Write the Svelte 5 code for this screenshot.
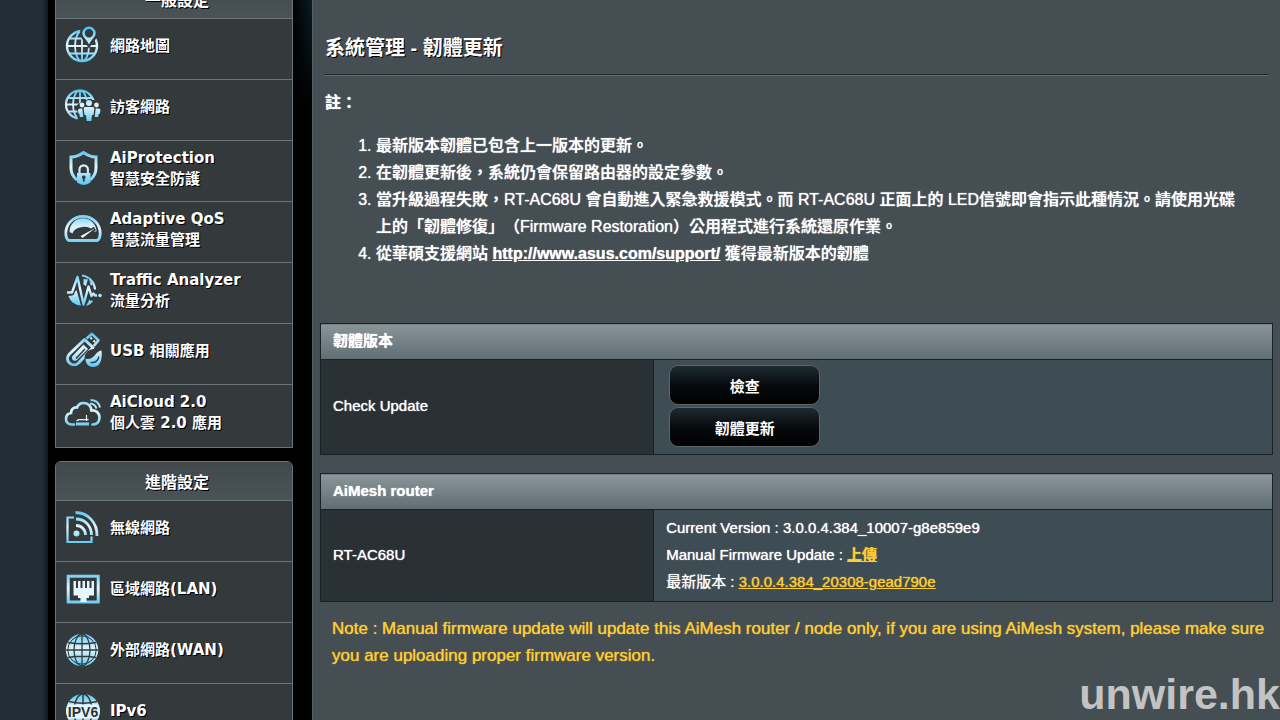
<script>
  const general = [
    { icon: 'map', lines: ['網路地圖'] },
    { icon: 'guest', lines: ['訪客網路'] },
    { icon: 'shield', lines: ['AiProtection', '智慧安全防護'] },
    { icon: 'gauge', lines: ['Adaptive QoS', '智慧流量管理'] },
    { icon: 'traffic', lines: ['Traffic Analyzer', '流量分析'] },
    { icon: 'usb', lines: ['USB 相關應用'] },
    { icon: 'cloud', lines: ['AiCloud 2.0', '個人雲 2.0 應用'] }
  ];
  const advanced = [
    { icon: 'wireless', lines: ['無線網路'] },
    { icon: 'lan', lines: ['區域網路(LAN)'] },
    { icon: 'wan', lines: ['外部網路(WAN)'] },
    { icon: 'ipv6', lines: ['IPv6'] }
  ];
</script>

{#snippet icon(name)}
  <svg class="icon" viewBox="0 0 38 38" aria-hidden="true">
    {#if name === 'map'}
      <g mask="url(#pin-gap)" fill="none" stroke="url(#ice)" stroke-width="1.8">
        <circle cx="18" cy="20" r="15" stroke-width="2.4" />
        <ellipse cx="18" cy="20" rx="7" ry="15" />
        <path d="M18 5V35.01M3 20H33M5.500 12.500H30.500M5.500 27.500H30.500" />
      </g>
      <path fill="url(#ice)" fill-rule="evenodd" d="M25 .5a6.700 6.700 0 0 1 6.700 6.700c0 4-4.700 6.300-6.700 11.300-2-5-6.700-7.300-6.700-11.300A6.700 6.700 0 0 1 25 .5zm0 2.600a4.200 4.200 0 1 0 0 8.400 4.200 4.200 0 0 0 0-8.400z" />
    {:else if name === 'guest'}
      <g mask="url(#guest-gap)" fill="none" stroke="url(#ice)" stroke-width="1.800">
        <circle cx="16" cy="17.500" r="14" stroke-width="2.200" />
        <ellipse cx="16" cy="17.500" rx="7" ry="14" />
        <path d="M16 3.500V31.510M2 17.500H30M4 11H28M4 24.500H28" />
      </g>
      <g fill="url(#ice)">
        <circle cx="25" cy="16" r="3" />
        <circle cx="18" cy="18" r="2.400" />
        <circle cx="32.500" cy="18" r="2.400" />
        <path d="M21 20h8q1.500 0 1.300 2l-.8 6h-1.500l-.7 6h-4.600l-.7-6h-1.500l-.8-6q-.2-2 1.300-2z" />
        <path d="M16 21.500h2.300l1 8.500h-3.500l-.5-3.500h-1l-.3-3.500q0-1.500 2-1.500zM34.500 21.500h-2.800l-1 8.500h3.500l.5-3h1l.8-4q0-1.500-2-1.500z" />
      </g>
    {:else if name === 'shield'}
      <path d="M13 32C8.500 28.500 7 25 7 20V9c5 0 9-2 12.500-4.500C23 7 27 9 32 9v11c0 5-1.500 8.500-6 12" fill="none" stroke="url(#ice)" stroke-width="3" />
      <path d="M15.500 26v-4.500a4.200 4.200 0 0 1 8.400 0V26" fill="none" stroke="url(#ice)" stroke-width="2.200" />
      <path fill="url(#ice)" fill-rule="evenodd" d="M13 25h13.500v9.500q-3.500 2-6.700 2.500-3.300-.5-6.800-2.500zM19.800 27.500a1.800 1.800 0 0 0-.9 3.400v2.600h1.800v-2.600a1.800 1.800 0 0 0-.9-3.400z" />
    {:else if name === 'gauge'}
      <path d="M4.500 31.500C2.500 30 1.800 27 1.800 24.500a17 17 0 0 1 34.400 0c0 2.500-.7 5.500-2.700 7z" fill="none" stroke="url(#ice)" stroke-width="2.800" stroke-linejoin="round" />
      <path d="M5.500 23a13.500 13.500 0 0 1 27-.5l-2.500 0a11.500 8.500 0 0 0-21.500 2z" fill="url(#ice)" />
      <path d="M17 27.500L31 19.500" stroke="#34393c" stroke-width="4" />
      <path d="M16.500 27L31.500 19 18.500 29z" fill="#e8f8ff" />
    {:else if name === 'traffic'}
      <path d="M18 5.500a15 15 0 0 1 13 14" fill="none" stroke="url(#ice)" stroke-width="2.200" />
      <path d="M19.500 9l5 .5 4 5-2.500 2-1-3-2.500 3-3-2z" fill="url(#ice)" />
      <path d="M4.500 26l4-.5 2.500-4 1.500-1.500 4.500 15.500C10 35 6 31 4.500 26zM22 36c3-.5 5.500-2.500 7-5l-3.500-1.500z" fill="url(#ice)" />
      <path d="M3.500 22.500H8L13.500 7l6 27.500 5-18 3 9.500 2-2.500 1.500 2h2" fill="none" stroke="#34393c" stroke-width="5" />
      <path d="M3 22.500h5L13.500 7l6 27.500 5-18 3 9.500 2-2.500 1.500 2h2" fill="none" stroke="url(#ice)" stroke-width="2.400" stroke-linejoin="round" />
      <circle cx="36" cy="25.500" r="1.800" fill="url(#ice)" />
    {:else if name === 'usb'}
      <path d="M22.500 7.500L28 2.800l6.500 6.500-4.700 5.500" fill="none" stroke="url(#ice)" stroke-width="2.600" stroke-linejoin="round" />
      <path d="M26.500 6.500l1.500 1.500M29.500 9.500l1.500 1.500" stroke="#e6f6fd" stroke-width="2" />
      <path d="M20.500 8.500l8.500 8L14.500 32c-6 5.500-15-2.500-9-9z" fill="none" stroke="url(#ice)" stroke-width="3" stroke-linejoin="round" />
      <path d="M19.500 13.500l4.500 4.500-11 11c-3 2.500-6.500-1-4.500-4z" fill="url(#ice)" />
      <path d="M12 27.500l9-9.500" stroke="#34393c" stroke-width="1.500" />
      <circle cx="29.500" cy="27" r="9" fill="#34393c" />
      <path d="M21.500 27.500C25 29 29 27 31 24c2-2.700 3.500-4 6.500-4.500 1.200 9-1.500 16.500-8 16.500-5 0-8-3.500-8-8.500z" fill="url(#ice)" />
      <path d="M26.500 31.500c4.500.5 7.500-2 8.500-6" fill="none" stroke="#34393c" stroke-width="1.300" />
    {:else if name === 'cloud'}
      <path d="M10 32.500H7.500C4 32.500 2 30 2 27s2-5.500 5-6c0-3.500 2.500-6 6-5.500C14.500 12 17 10.800 20 11c4.500.3 7 3.500 7.500 7.500 4.500-.5 8 2.500 8 7s-3 7-7 7" fill="none" stroke="url(#ice)" stroke-width="2.700" stroke-linecap="round" />
      <path d="M26.500 8c5 0 8.500 3 9.500 7.500M26 11.500c3.500.2 5.500 2 6.500 5" fill="none" stroke="url(#ice)" stroke-width="1.900" />
      <path d="M12 30.500h13v3H12z" fill="url(#ice)" />
      <path d="M22.500 23v6M12.500 29l2-1.300h10" fill="none" stroke="#dff5ff" stroke-width="1.200" />
    {:else if name === 'wireless'}
      <path d="M10 9.500H3.500V34h24v-5.500" fill="none" stroke="url(#ice)" stroke-width="2.200" />
      <g fill="none" stroke="url(#ice)" stroke-width="2.800">
        <path d="M11.500 4.500C24 4.500 33.500 15 33 28" />
        <path d="M12 11c9 0 15.500 7 15.500 16" />
        <path d="M12 17.500c5.500 0 9.500 4 9.500 9.500" />
      </g>
      <circle cx="12.500" cy="25.500" r="3" fill="url(#ice)" />
    {:else if name === 'lan'}
      <rect x="4.200" y="7.200" width="30" height="25.800" fill="none" stroke="url(#ice)" stroke-width="3" />
      <path fill="#e6f6fd" d="M9.500 12h2.500v7h2v-7h2.500v7h2v-7H21v7h2v-7h2.500v7h2v-7H30v14.500h-5V29h-2.500v4h-6v-4H14v-2.500H9.500z" />
    {:else if name === 'wan'}
      <circle cx="18" cy="20" r="16.200" fill="url(#ice)" />
      <circle cx="18" cy="20" r="14.200" fill="none" stroke="#34393c" stroke-width="1" />
      <g fill="none" stroke="#34393c" stroke-width="1.300">
        <ellipse cx="18" cy="20" rx="8" ry="16" />
        <path d="M18 4v32M2 20h32M4 12.500Q18 15 32 12.500M4 27.500Q18 25 32 27.500" />
      </g>
    {:else if name === 'ipv6'}
      <circle cx="19" cy="20" r="17" fill="url(#ice)" />
      <g fill="none" stroke="#34393c" stroke-width="1.500">
        <ellipse cx="19" cy="20" rx="9" ry="17" />
        <path d="M19 3v34M5 10.500Q19 14 33 10.500" />
      </g>
      <path d="M4 13.500h30q3 7 0 14H4q-3-7 0-14z" fill="#e9f6fd" />
      <text x="19" y="25.500" text-anchor="middle" class="glyph">IPV6</text>
    {/if}
  </svg>
{/snippet}

{#snippet menu(title, items)}
  <section class="menu">
    <h2>{title}</h2>
    <ul>
      {#each items as item}
        <li>
          <a href="#{item.icon}">
            {@render icon(item.icon)}
            <span class="label">
              {#each item.lines as line}<span class="line">{line}</span>{/each}
            </span>
          </a>
        </li>
      {/each}
    </ul>
  </section>
{/snippet}

<svg class="defs" width="0" height="0" aria-hidden="true">
  <defs>
    <linearGradient id="ice" gradientUnits="userSpaceOnUse" x1="0" y1="2" x2="0" y2="36">
      <stop offset="0" stop-color="#4cc3f0" />
      <stop offset=".5" stop-color="#e6f6fd" />
      <stop offset="1" stop-color="#58c8f3" />
    </linearGradient>
    <mask id="pin-gap" maskUnits="userSpaceOnUse" x="0" y="0" width="38" height="38">
      <path fill="#fff" d="M0 0h38v38H0z" />
      <path d="M25-2a9 9 0 0 1 9 9c0 6-6 9-9 16-3-7-9-10-9-16a9 9 0 0 1 9-9z" />
    </mask>
    <mask id="guest-gap" maskUnits="userSpaceOnUse" x="0" y="0" width="38" height="38">
      <path fill="#fff" d="M0 0h38v38H0z" />
      <path d="M13 18l7-5h10l8 5v20H14z" />
    </mask>
  </defs>
</svg>

<div class="page">
  <nav>
    {@render menu('一般設定', general)}
    {@render menu('進階設定', advanced)}
  </nav>

  <main>
    <h1>系統管理 - 韌體更新</h1>
    <p class="remark">註：</p>
    <ol>
      <li>最新版本韌體已包含上一版本的更新。</li>
      <li>在韌體更新後，系統仍會保留路由器的設定參數。</li>
      <li>
        當升級過程失敗，RT-AC68U 會自動進入緊急救援模式。而 RT-AC68U 正面上的 LED信號即會指示此種情況。請使用光碟<br />上的「韌體修復」（Firmware Restoration）公用程式進行系統還原作業。
      </li>
      <li>從華碩支援網站 <a href="http://www.asus.com/support/">http://www.asus.com/support/</a> 獲得最新版本的韌體</li>
    </ol>

    <table>
      <colgroup><col class="name" /><col /></colgroup>
      <thead>
        <tr><th colspan="2">韌體版本</th></tr>
      </thead>
      <tbody>
        <tr>
          <th scope="row">Check Update</th>
          <td class="actions">
            <button type="button">檢查</button>
            <button type="button">韌體更新</button>
          </td>
        </tr>
      </tbody>
    </table>

    <table>
      <colgroup><col class="name" /><col /></colgroup>
      <thead>
        <tr><th colspan="2">AiMesh router</th></tr>
      </thead>
      <tbody>
        <tr>
          <th scope="row">RT-AC68U</th>
          <td class="versions">
            <div>Current Version : 3.0.0.4.384_10007-g8e859e9</div>
            <div>Manual Firmware Update : <a class="strong" href="#upload">上傳</a></div>
            <div>最新版本 : <a href="#latest">3.0.0.4.384_20308-gead790e</a></div>
          </td>
        </tr>
      </tbody>
    </table>

    <p class="note">
      Note : Manual firmware update will update this AiMesh router / node only, if you are using AiMesh system, please make sure you are uploading proper firmware version.
    </p>
  </main>

  <div class="watermark">unwire.hk</div>
</div>

<style>
  :global(body) {
    background: #202d36;
  }

  .defs {
    position: absolute;
  }

  .page {
    position: relative;
    display: flex;
    height: 100vh;
    overflow: hidden;
    padding-left: 48px;
    background: linear-gradient(90deg, #202d36 42px, #12191e 48px);
    color: #fff;
    font-family: "Liberation Sans", "Noto Sans CJK TC", sans-serif;
    font-size: 16px;
    line-height: 27px;
  }

  nav {
    flex: none;
    width: 238px;
    padding: 0 19px 0 7px;
    background: linear-gradient(90deg, #000 245px, transparent), linear-gradient(#0a1d27, #000 110px);
    font-family: "DejaVu Sans", "Noto Sans CJK TC", sans-serif;
    font-size: 15px;
    font-weight: 700;
    line-height: 21px;
    text-shadow: 1px 1px 0 #000;
  }

  .menu {
    border: 1px solid #6b7578;
    border-radius: 6px 6px 0 0;
    background: #34393c;
    margin-bottom: 13px;
  }

  .menu:first-child {
    margin-top: -21px;
  }

  h2 {
    margin: 0;
    padding: 10px 0 7px;
    border-radius: 5px 5px 0 0;
    background: linear-gradient(#40484b, #4a5356);
    font-size: 16px;
    text-align: center;
    text-indent: 6px;
  }

  ul {
    margin: 0;
    padding: 0;
    list-style: none;
  }

  .menu li {
    border-top: 1px solid #6b7578;
  }

  .menu li:last-child {
    padding-bottom: 2px;
  }

  .menu a {
    display: flex;
    align-items: center;
    gap: 8px;
    height: 52px;
    padding: 0 8px 8px;
    color: #fff;
    text-decoration: none;
  }

  .label {
    padding-top: 3px;
  }

  .line {
    display: block;
  }

  .icon {
    flex: none;
    width: 38px;
    height: 38px;
  }

  .glyph {
    fill: #2b3338;
    font: 700 14px "Liberation Sans", sans-serif;
    text-shadow: none;
  }

  main {
    flex: 1;
    min-width: 0;
    padding: 0 7px;
    border-left: 1px solid #566165;
    background: #454f53;
    text-shadow: 0 0 1px currentColor;
  }

  h1 {
    margin: 0 4px 0 5px;
    padding: 34px 0 11px;
    border-bottom: 1px solid #1f292d;
    box-shadow: 0 1px #5f6b70;
    font-size: 20px;
    line-height: 29px;
    text-shadow: 1px 1px 0 #000;
  }

  .remark {
    margin: 14px 5px 16px;
    font-weight: 700;
  }

  ol {
    margin: 0 0 56px;
    padding-left: 56px;
    font-weight: 500;
    white-space: nowrap;
    text-spacing-trim: space-all;
  }

  ol a {
    color: #fff;
    font-weight: 700;
  }

  table {
    width: 100%;
    margin-bottom: 18px;
    border-collapse: collapse;
    table-layout: fixed;
    background: #3e4d53;
    font-size: 15px;
  }

  .name {
    width: 35%;
  }

  th,
  td {
    border: 1px solid #182125;
    padding: 0 12px;
    text-align: left;
  }

  thead th {
    padding: 3px 12px 5px;
    background: linear-gradient(#8a9599, #5f6d72);
    font-weight: 700;
  }

  tbody th {
    padding-bottom: 3px;
    background: #2a3134;
    font-weight: 500;
  }

  .actions {
    padding: 5px 15px 7px;
  }

  .versions {
    padding: 4px 12px 6px;
  }

  button {
    display: block;
    width: 151px;
    height: 40px;
    border: 1px solid #59666b;
    border-radius: 9px;
    background: linear-gradient(#1f2b31, #070b0d 50%, #000);
    color: #fff;
    font: 700 15px "Liberation Sans", "Noto Sans CJK TC", sans-serif;
  }

  button + button {
    margin-top: 2px;
  }

  td a,
  .note {
    color: #fc3;
  }

  .strong {
    font-weight: 700;
  }

  .note {
    margin: -5px 0 0 12px;
    font-size: 17px;
  }

  .watermark {
    position: absolute;
    right: 0;
    bottom: 4px;
    color: #c3c3c3;
    font-size: 43px;
    font-weight: 700;
    line-height: 43px;
  }
</style>
